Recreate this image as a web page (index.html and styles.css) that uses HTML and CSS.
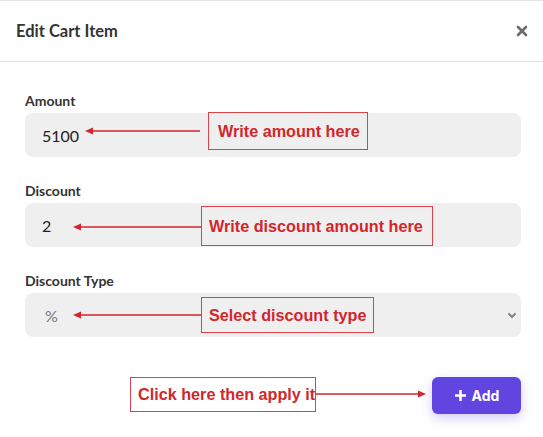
FILE: index.html
```html
<!DOCTYPE html>
<html>
<head>
<meta charset="utf-8">
<link rel="stylesheet" href="styles.css">
</head>
<body>
<div class="dialog">
  <div class="header">
    <h1 class="title">Edit Cart Item</h1>
    <svg class="close" width="12" height="12" viewBox="0 0 12 12"><path d="M2 2 L10 10 M10 2 L2 10" stroke="#6b6b6b" stroke-width="2.6" stroke-linecap="round"/></svg>
  </div>
  <div class="body">
    <div class="group">
      <label class="label">Amount</label>
      <div class="field">
        <input class="input" type="text" value="5100">
        <svg class="arrow a1" width="116" height="10" viewBox="0 0 116 10"><path d="M6 5 H115" stroke="#d3262b" stroke-width="1.5"/><path d="M0 5 L8 1.5 L8 8.5 Z" fill="#d3262b"/></svg>
        <div class="note n1">Write amount here</div>
      </div>
    </div>
    <div class="group">
      <label class="label">Discount</label>
      <div class="field">
        <input class="input" type="text" value="2">
        <svg class="arrow a2" width="128" height="10" viewBox="0 0 128 10"><path d="M6 5 H128" stroke="#d3262b" stroke-width="1.5"/><path d="M0 5 L8 1.5 L8 8.5 Z" fill="#d3262b"/></svg>
        <div class="note n2">Write discount amount here</div>
      </div>
    </div>
    <div class="group">
      <label class="label">Discount Type</label>
      <div class="field">
        <select class="input select"><option>%</option></select>
        <svg class="chev" width="10" height="7" viewBox="0 0 10 7"><path d="M1.5 1.5 L5 5 L8.5 1.5" fill="none" stroke="#777" stroke-width="1.8"/></svg>
        <svg class="arrow a3" width="128" height="10" viewBox="0 0 128 10"><path d="M6 5 H128" stroke="#d3262b" stroke-width="1.5"/><path d="M0 5 L8 1.5 L8 8.5 Z" fill="#d3262b"/></svg>
        <div class="note n3">Select discount type</div>
      </div>
    </div>
    <div class="footer">
      <div class="note n4">Click here then apply it</div>
      <svg class="arrow a4" width="110" height="10" viewBox="0 0 110 10"><path d="M0 5 H104" stroke="#d3262b" stroke-width="1.5"/><path d="M110 5 L102 1.5 L102 8.5 Z" fill="#d3262b"/></svg>
      <button class="btn"><svg width="13" height="13" viewBox="0 0 13 13"><path d="M6.5 1 V12 M1 6.5 H12" stroke="#fff" stroke-width="2.6"/></svg>Add</button>
    </div>
  </div>
</div>
</body>
</html>
```
FILE: styles.css
```css
* { box-sizing: border-box; }
html, body { margin: 0; padding: 0; background: #fff; }
body { font-family: Lato, "Open Sans", sans-serif; color: #333; }
.dialog { width: 543px; height: 437px; border-top: 1px solid #e4e4e4; background: #fff; }
.header { height: 61px; border-bottom: 1px solid #e2e2e2; display: flex; align-items: center; justify-content: space-between; padding: 0 16px 0 16px; }
.title { margin: 0; font-size: 16.5px; font-weight: 700; color: #333; letter-spacing: 0; }
.close { margin-right: -1px; margin-top: 0; }
.body { padding: 30px 22px 0 25px; }
.group { margin-bottom: 25px; }
.label { display: block; font-size: 14px; font-weight: 700; line-height: 18px; color: #333; margin-bottom: 3px; }
.field { position: relative; }
.input { display: block; width: 100%; height: 44px; border: none; border-radius: 8px; background: #efefef; font-family: Lato, sans-serif; font-size: 16px; color: #222; padding: 0 0 0 17px; outline: none; }
.select { appearance: none; -webkit-appearance: none; color: #777; padding-left: 20px; }
.chev { position: absolute; right: 4px; top: 19px; }
.arrow { position: absolute; }
.a1 { left: 60px; top: 13px; }
.a2 { left: 48px; top: 19px; }
.a3 { left: 48px; top: 17px; }
.note { position: absolute; border: 1.5px solid #d7444a; color: #d3262b; font-family: "Liberation Sans", Arial, sans-serif; font-weight: 700; font-size: 16.2px; display: flex; align-items: center; padding-left: 9px; white-space: nowrap; }
.n1 { left: 183px; top: -1px; width: 160px; height: 38px; }
.n2 { left: 176px; top: 3px; width: 232px; height: 40px; padding-left: 7px; }
.n3 { left: 176px; top: 4px; width: 173px; height: 36px; padding-left: 7px; }
.footer { position: relative; margin-top: 40px; display: flex; justify-content: flex-end; }
.n4 { left: 105px; top: 0; width: 186px; height: 35px; padding-left: 7px; }
.a4 { left: 291px; top: 12px; }
.btn { width: 89px; height: 37px; border: none; border-radius: 6px; background: #6045e1; color: #fff; font-family: Inter, Lato, sans-serif; font-weight: 700; font-size: 14px; display: flex; align-items: center; justify-content: center; gap: 5px; box-shadow: 0 4px 12px rgba(96, 69, 225, 0.28); padding: 0 0 0 0; }
```
